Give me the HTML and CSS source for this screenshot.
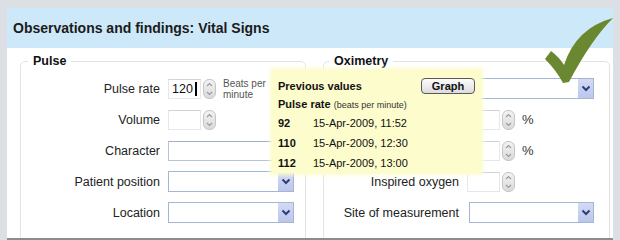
FILE: index.html
```html
<!DOCTYPE html>
<html lang="en">
<head>
    <meta charset="UTF-8">
    <title>Observations and findings: Vital Signs</title>
    <link rel="stylesheet" href="styles.css">
</head>
<body>

<div class="panel">
    <h1 class="panel-title">Observations and findings: Vital Signs</h1>

    <div class="panel-body">
        <fieldset class="group group-pulse">
            <legend>Pulse</legend>

            <div class="row">
                <label class="row-label">Pulse rate</label>
                <div class="spin">
                    <span class="spin-field">120<i class="caret"></i></span>
                    <span class="spin-btn"><svg viewBox="0 0 11 18" width="11" height="18"><polyline points="3,6 5.5,3.5 8,6"/><polyline points="3,12 5.5,14.5 8,12"/></svg></span>
                </div>
                <span class="unit-small">Beats per<br>minute</span>
            </div>

            <div class="row">
                <label class="row-label">Volume</label>
                <div class="spin">
                    <span class="spin-field"></span>
                    <span class="spin-btn"><svg viewBox="0 0 11 18" width="11" height="18"><polyline points="3,6 5.5,3.5 8,6"/><polyline points="3,12 5.5,14.5 8,12"/></svg></span>
                </div>
            </div>

            <div class="row">
                <label class="row-label">Character</label>
                <span class="text-field"></span>
            </div>

            <div class="row">
                <label class="row-label">Patient position</label>
                <div class="select"><span class="select-arrow"><svg viewBox="0 0 10 7" width="10" height="7"><polyline points="1.5,1.5 5,5 8.5,1.5"/></svg></span></div>
            </div>

            <div class="row">
                <label class="row-label">Location</label>
                <div class="select"><span class="select-arrow"><svg viewBox="0 0 10 7" width="10" height="7"><polyline points="1.5,1.5 5,5 8.5,1.5"/></svg></span></div>
            </div>
        </fieldset>

        <fieldset class="group group-oxi">
            <legend>Oximetry</legend>

            <!-- labels of the first three rows sit under the tooltip -->
            <div class="row">
                <label class="row-label"></label>
                <div class="select"><span class="select-arrow"><svg viewBox="0 0 10 7" width="10" height="7"><polyline points="1.5,1.5 5,5 8.5,1.5"/></svg></span></div>
            </div>

            <div class="row">
                <label class="row-label"></label>
                <div class="spin">
                    <span class="spin-field"></span>
                    <span class="spin-btn"><svg viewBox="0 0 11 18" width="11" height="18"><polyline points="3,6 5.5,3.5 8,6"/><polyline points="3,12 5.5,14.5 8,12"/></svg></span>
                </div>
                <span class="unit">%</span>
            </div>

            <div class="row">
                <label class="row-label"></label>
                <div class="spin">
                    <span class="spin-field"></span>
                    <span class="spin-btn"><svg viewBox="0 0 11 18" width="11" height="18"><polyline points="3,6 5.5,3.5 8,6"/><polyline points="3,12 5.5,14.5 8,12"/></svg></span>
                </div>
                <span class="unit">%</span>
            </div>

            <div class="row">
                <label class="row-label">Inspired oxygen</label>
                <div class="spin">
                    <span class="spin-field"></span>
                    <span class="spin-btn"><svg viewBox="0 0 11 18" width="11" height="18"><polyline points="3,6 5.5,3.5 8,6"/><polyline points="3,12 5.5,14.5 8,12"/></svg></span>
                </div>
            </div>

            <div class="row">
                <label class="row-label">Site of measurement</label>
                <div class="select"><span class="select-arrow"><svg viewBox="0 0 10 7" width="10" height="7"><polyline points="1.5,1.5 5,5 8.5,1.5"/></svg></span></div>
            </div>
        </fieldset>
    </div>

    <!-- previous values tooltip -->
    <div class="popup">
        <div class="popup-head">
            <b>Previous values</b>
            <button class="graph-btn">Graph</button>
        </div>
        <div class="popup-sub">Pulse rate <small>(beats per minute)</small></div>
        <div class="popup-row"><span class="popup-num">92</span><span>15-Apr-2009, 11:52</span></div>
        <div class="popup-row"><span class="popup-num">110</span><span>15-Apr-2009, 12:30</span></div>
        <div class="popup-row"><span class="popup-num">112</span><span>15-Apr-2009, 13:00</span></div>
    </div>

    <svg class="tick" viewBox="0 0 80 72" width="80" height="72">
        <path d="M7,44 L13,36 Q21,42 26,50 Q38,13 75,3 Q53,25 31,67 L25,68 Q18,55 7,44 Z"/>
    </svg>
</div>

</body>
</html>
```

FILE: styles.css
```css
body {
    margin: 0;
    width: 620px;
    height: 240px;
    overflow: hidden;
    background: #dcdfe4;
    font-family: "Liberation Sans", Arial, sans-serif;
    color: #222;
}

.panel {
    position: relative;
    margin: 8px 7px 0;
    height: 230px;
    background: #fff;
    border-bottom: 2px solid #8c8c8c;
}

.panel-title {
    margin: 0;
    height: 40px;
    line-height: 40px;
    padding-left: 6px;
    background: #cde8f8;
    font-size: 14px;
    font-weight: bold;
    color: #1b1b1b;
}

.panel-body {
    display: flex;
    gap: 17px;
    padding: 5px 0 0 13px;
    height: 185px;
    overflow: hidden;
}

.group {
    margin: 0;
    padding: 4px 0 0;
    min-width: 0;
    height: 220px;
    box-sizing: border-box;
    border: 1px solid #e3e3e3;
    border-radius: 5px;
}
.group-pulse { width: 286px; }
.group-oxi { width: 287px; }

.group legend {
    margin-left: 7px;
    padding: 0 5px;
    font-size: 12.5px;
    font-weight: bold;
    line-height: 16px;
    color: #111;
}
.group-oxi legend { margin-left: 5px; }

.row { display: flex; align-items: center; height: 31px; }
.row-label {
    flex: none;
    width: 139px;
    padding-right: 8px;
    text-align: right;
    font-size: 12.5px;
    color: #222;
}
.group-oxi .row-label { width: 135px; }

.spin { display: flex; gap: 2px; width: 48px; height: 20px; flex: none; }
.spin-field {
    display: flex;
    align-items: center;
    width: 33px;
    box-sizing: border-box;
    padding-left: 3px;
    border: 1px solid #e4e7eb;
    border-top-color: #d0d4d9;
    font-size: 12.5px;
    color: #111;
}
.caret { display: inline-block; width: 2px; height: 14px; margin-left: 2px; background: #000; }
.spin-btn {
    width: 13px;
    height: 20px;
    box-sizing: border-box;
    border: 1px solid #c5c5c5;
    border-radius: 6px;
    background: linear-gradient(#f3f3f3, #dadada);
}
.spin-btn svg { display: block; }
.spin-btn polyline { fill: none; stroke: #9a9a9a; stroke-width: 1.1; }

.unit-small { margin-left: 7px; font-size: 10px; line-height: 11px; color: #555; }
.unit { margin-left: 7px; font-size: 13px; color: #333; }

.text-field {
    width: 128px;
    height: 20px;
    box-sizing: border-box;
    border: 1px solid #b7c4d6;
    border-top-color: #9fb1ca;
}

.select {
    display: flex;
    width: 126px;
    height: 21px;
    box-sizing: border-box;
    border: 1px solid #a3b6d3;
    background: #fff;
}
.group-oxi .select { width: 125px; margin-left: 2px; }
.select-arrow {
    display: flex;
    align-items: center;
    justify-content: center;
    margin-left: auto;
    width: 15px;
    background: linear-gradient(#d3daf4, #bcc6ec);
}
.select-arrow polyline { fill: none; stroke: #2c3f7c; stroke-width: 2; }

.popup {
    position: absolute;
    left: 265px;
    top: 62px;
    width: 209px;
    height: 103px;
    box-sizing: border-box;
    padding: 6px 6px 0 6px;
    background: #fcfccd;
    box-shadow: 0 0 4px 2px #fcfccd;
    font-size: 11px;
    color: #111;
}
.popup-head { display: flex; justify-content: space-between; align-items: center; height: 20px; }
.graph-btn {
    width: 54px;
    height: 16px;
    padding: 0;
    border: 1px solid #5a5a5a;
    border-radius: 4px;
    background: linear-gradient(#fdfdfd, #dcdcdc);
    font-family: inherit;
    font-size: 11px;
    font-weight: bold;
    color: #111;
}
.popup-sub { height: 17px; line-height: 17px; font-weight: bold; }
.popup-sub small { font-size: 9px; font-weight: normal; color: #333; }
.popup-row { display: flex; align-items: center; height: 20px; }
.popup-num { width: 35px; font-weight: bold; }

.tick { position: absolute; left: 531px; top: 7px; }
.tick path { fill: #6a8830; }
```
